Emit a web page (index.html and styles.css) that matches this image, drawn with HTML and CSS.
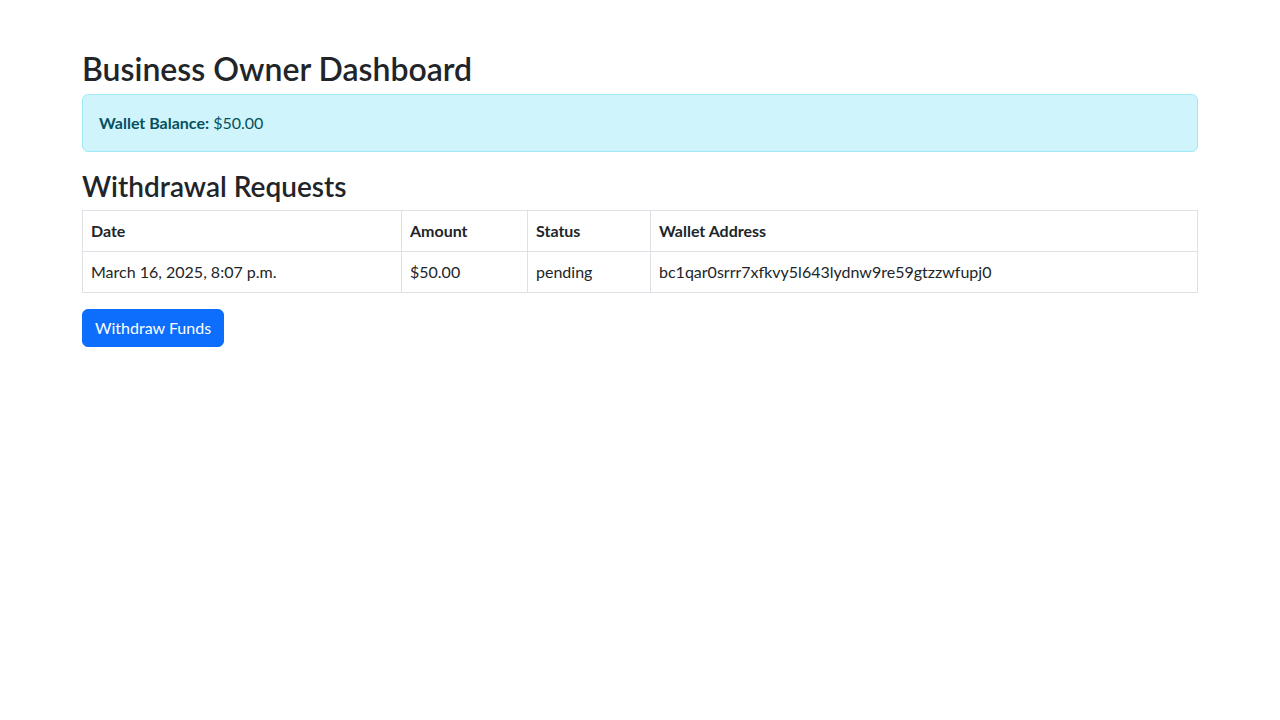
FILE: index.html
```html
<!DOCTYPE html>
<html lang="en">
<head>
<meta charset="utf-8">
<title>Business Owner Dashboard</title>
<link rel="stylesheet" href="styles.css">
</head>
<body>
<div class="container">
  <h2 class="title">Business Owner Dashboard</h2>
  <div class="alert">
    <strong>Wallet Balance:</strong> $50.00
  </div>
  <h3 class="subtitle">Withdrawal Requests</h3>
  <table class="table">
    <colgroup>
      <col class="col-date">
      <col class="col-amount">
      <col class="col-status">
      <col>
    </colgroup>
    <thead>
      <tr>
        <th>Date</th>
        <th>Amount</th>
        <th>Status</th>
        <th>Wallet Address</th>
      </tr>
    </thead>
    <tbody>
      <tr>
        <td>March 16, 2025, 8:07 p.m.</td>
        <td>$50.00</td>
        <td>pending</td>
        <td>bc1qar0srrr7xfkvy5l643lydnw9re59gtzzwfupj0</td>
      </tr>
    </tbody>
  </table>
  <a class="btn" href="#">Withdraw Funds</a>
</div>
</body>
</html>
```

FILE: styles.css
```css
* {
  box-sizing: border-box;
}

body {
  margin: 0;
  font-family: Lato, "Noto Sans", "Liberation Sans", sans-serif;
  font-size: 16px;
  line-height: 1.5;
  color: #212529;
  background: #fff;
}

.container {
  max-width: 1140px;
  margin: 48px auto 0;
  padding: 0 12px;
}

.title {
  margin: 0 0 6px;
  padding-top: 2px;
  font-size: 32px;
  font-weight: 600;
  line-height: 1.2;
}

.subtitle {
  margin: 0 0 6px;
  padding-top: 2px;
  font-size: 28px;
  font-weight: 600;
  line-height: 1.2;
}

.alert {
  padding: 16px;
  margin-bottom: 16px;
  color: #055160;
  background: #cff4fc;
  border: 1px solid #9eeaf9;
  border-radius: 6px;
}

.alert strong {
  font-weight: 700;
}

.table {
  width: 100%;
  margin-bottom: 16px;
  border-collapse: collapse;
  table-layout: fixed;
  color: #212529;
}

.col-date {
  width: 319px;
}

.col-amount {
  width: 126px;
}

.col-status {
  width: 123px;
}

.table th,
.table td {
  padding: 8px;
  border: 1px solid #dee2e6;
  text-align: left;
  vertical-align: top;
}

.table th {
  font-weight: 700;
}

.btn {
  display: inline-block;
  padding: 6px 12px;
  font-size: 16px;
  line-height: 1.5;
  color: #fff;
  background: #0d6efd;
  border: 1px solid #0d6efd;
  border-radius: 6px;
  text-decoration: none;
}
```
